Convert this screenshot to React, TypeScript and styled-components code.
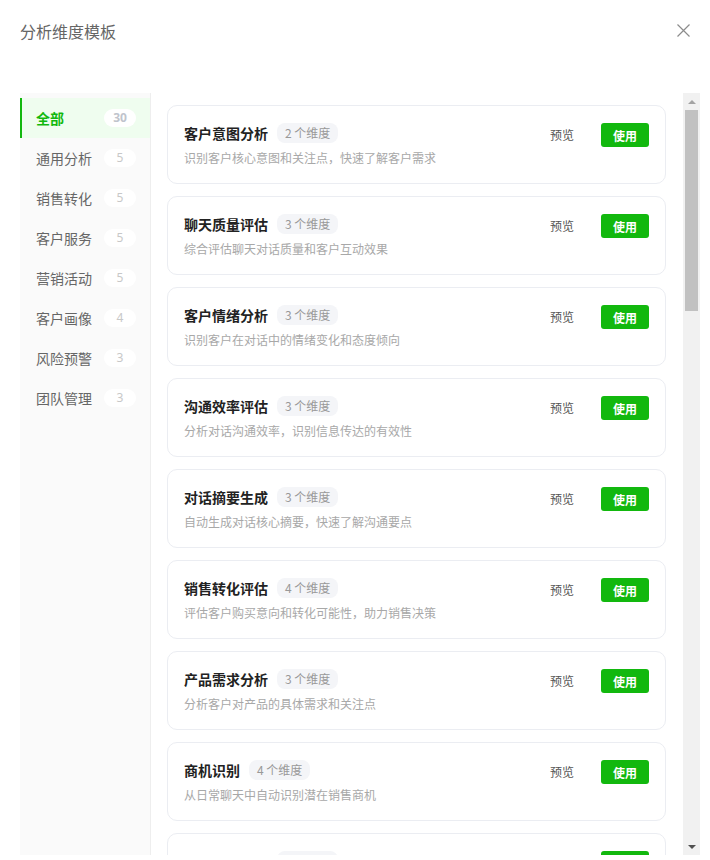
import styled, { createGlobalStyle } from "styled-components";
import { useLayoutEffect, useRef, useState } from "react";

const GlobalStyle = createGlobalStyle`
  html, body {
    margin: 0;
    padding: 0;
    background: #fff;
    font-family: "Noto Sans CJK SC", "Noto Sans", sans-serif;
  }
  * {
    box-sizing: border-box;
  }
`;

const Dialog = styled.div`
  width: 700px;
  height: 860px;
  display: flex;
  flex-direction: column;
  background: #fff;
`;
const Header = styled.div`
  height: 93px;
  padding: 20px 7px 0 20px;
  display: flex;
  align-items: flex-start;
  justify-content: space-between;
`;
const Title = styled.h3`
  margin: 0;
  font-size: 16px;
  line-height: 22px;
  font-weight: 400;
  color: #666;
`;
const Close = styled.button`
  width: 20px;
  height: 20px;
  border: none;
  background: none;
  padding: 0;
  cursor: pointer;
  display: flex;
  align-items: center;
  justify-content: center;
`;
const Body = styled.div`
  height: 762px;
  margin-left: 20px;
  display: flex;
`;
const Sidebar = styled.div`
  width: 131px;
  background: #fafafa;
  border-right: 1px solid #eeeeee;
  padding-top: 5px;
`;
const NavItem = styled.div<{ $active?: boolean }>`
  height: 40px;
  padding: 0 14px 0 14px;
  display: flex;
  align-items: center;
  justify-content: space-between;
  font-size: 14px;
  cursor: pointer;
  color: ${(p) => (p.$active ? "#12b80e" : "#666")};
  font-weight: ${(p) => (p.$active ? 700 : 400)};
  background: ${(p) => (p.$active ? "#effdef" : "transparent")};
  border-left: 2px solid ${(p) => (p.$active ? "#12b80e" : "transparent")};
`;
const Badge = styled.span<{ $active?: boolean }>`
  width: 32px;
  height: 18px;
  border-radius: 9px;
  background: #fff;
  font-size: 12px;
  line-height: 18px;
  text-align: center;
  color: ${(p) => (p.$active ? "#c0c4cc" : "#c8c8c8")};
  font-weight: ${(p) => (p.$active ? 700 : 400)};
  font-family: "Noto Sans", sans-serif;
`;
const ListWrap = styled.div`
  flex: 1;
  display: flex;
  min-width: 0;
`;
const Viewport = styled.div`
  flex: 1;
  overflow-y: auto;
  padding: 12px 17px 12px 16px;
  scrollbar-width: none;
  &::-webkit-scrollbar {
    display: none;
  }
`;
const Scrollbar = styled.div`
  width: 17px;
  background: #f1f1f1;
  display: flex;
  flex-direction: column;
`;
const ArrowButton = styled.div<{ $down?: boolean }>`
  height: 17px;
  flex-shrink: 0;
  display: flex;
  align-items: center;
  justify-content: center;
  &::before {
    content: "";
    width: 0;
    height: 0;
    border-left: 4px solid transparent;
    border-right: 4px solid transparent;
    ${(p) =>
      p.$down
        ? "border-top: 4px solid #505050;"
        : "border-bottom: 4px solid #a3a3a3;"}
  }
`;
const Track = styled.div`
  flex: 1;
  position: relative;
`;
const Thumb = styled.div`
  position: absolute;
  left: 2px;
  right: 2px;
  background: #c1c1c1;
`;
const Card = styled.div`
  border: 1px solid #ebedf2;
  border-radius: 10px;
  padding: 16px;
  margin-bottom: 12px;
  display: flex;
  align-items: flex-start;
  justify-content: space-between;
  background: #fff;
`;
const Info = styled.div`
  display: flex;
  flex-direction: column;
`;
const TitleRow = styled.div`
  height: 22px;
  display: flex;
  align-items: center;
  gap: 9px;
`;
const CardTitle = styled.span`
  font-size: 14px;
  font-weight: 700;
  color: #222;
`;
const Tag = styled.span`
  height: 20px;
  padding: 0 8px;
  border-radius: 8px;
  background: #f4f5f8;
  color: #999;
  font-size: 12px;
  line-height: 20px;
`;
const Desc = styled.div`
  margin-top: 5px;
  font-size: 12px;
  line-height: 18px;
  color: #a8a8a8;
`;
const Actions = styled.div`
  display: flex;
  align-items: center;
  padding-top: 1px;
`;
const Preview = styled.span`
  font-size: 12px;
  line-height: 22px;
  color: #555;
  margin-right: 27px;
  cursor: pointer;
`;
const UseButton = styled.button`
  height: 24px;
  padding: 0 12px;
  border: none;
  border-radius: 3px;
  background: #12b80e;
  color: #fff;
  font-size: 12px;
  font-weight: 700;
  font-family: inherit;
  cursor: pointer;
`;

const categories = [
  { name: "全部", count: 30 },
  { name: "通用分析", count: 5 },
  { name: "销售转化", count: 5 },
  { name: "客户服务", count: 5 },
  { name: "营销活动", count: 5 },
  { name: "客户画像", count: 4 },
  { name: "风险预警", count: 3 },
  { name: "团队管理", count: 3 },
];

const templates = [
  { title: "客户意图分析", dims: 2, desc: "识别客户核心意图和关注点，快速了解客户需求" },
  { title: "聊天质量评估", dims: 3, desc: "综合评估聊天对话质量和客户互动效果" },
  { title: "客户情绪分析", dims: 3, desc: "识别客户在对话中的情绪变化和态度倾向" },
  { title: "沟通效率评估", dims: 3, desc: "分析对话沟通效率，识别信息传达的有效性" },
  { title: "对话摘要生成", dims: 3, desc: "自动生成对话核心摘要，快速了解沟通要点" },
  { title: "销售转化评估", dims: 4, desc: "评估客户购买意向和转化可能性，助力销售决策" },
  { title: "产品需求分析", dims: 3, desc: "分析客户对产品的具体需求和关注点" },
  { title: "商机识别", dims: 4, desc: "从日常聊天中自动识别潜在销售商机" },
  { title: "价格敏感分析", dims: 3, desc: "识别客户对价格的敏感程度和预算范围" },
  { title: "成交阶段判断", dims: 3, desc: "判断客户当前所处的成交阶段" },
  { title: "服务满意度", dims: 4, desc: "评估客户对服务过程的满意程度" },
  { title: "问题解决率", dims: 3, desc: "分析客户问题是否得到有效解决" },
  { title: "投诉风险识别", dims: 3, desc: "识别对话中潜在的客户投诉风险" },
  { title: "响应时效分析", dims: 2, desc: "统计并分析客服响应的及时性" },
  { title: "服务规范检查", dims: 4, desc: "检查服务用语和流程是否符合规范" },
  { title: "活动兴趣分析", dims: 3, desc: "识别客户对营销活动的兴趣程度" },
  { title: "优惠敏感度", dims: 2, desc: "分析客户对优惠信息的反应和偏好" },
  { title: "渠道来源分析", dims: 3, desc: "识别客户来源渠道和触达方式" },
  { title: "活动效果评估", dims: 4, desc: "评估营销活动的整体转化效果" },
  { title: "复购意向分析", dims: 3, desc: "识别客户再次购买的意向和时机" },
  { title: "客户标签提取", dims: 4, desc: "从聊天内容中提取客户画像标签" },
  { title: "消费能力评估", dims: 3, desc: "评估客户的消费水平和购买能力" },
  { title: "兴趣偏好分析", dims: 3, desc: "分析客户的兴趣爱好和产品偏好" },
  { title: "客户生命周期", dims: 4, desc: "判断客户所处的生命周期阶段" },
  { title: "流失风险预警", dims: 3, desc: "识别客户流失的风险信号" },
  { title: "敏感词监测", dims: 2, desc: "监测对话中出现的敏感词和违规内容" },
  { title: "合规风险检查", dims: 3, desc: "检查对话内容是否存在合规风险" },
  { title: "员工表现评估", dims: 4, desc: "综合评估员工在沟通中的表现" },
  { title: "话术执行分析", dims: 3, desc: "分析员工对标准话术的执行情况" },
  { title: "团队协作评估", dims: 3, desc: "评估团队成员之间的协作效率" },
];

function App() {
  const [active, setActive] = useState(0);
  const viewRef = useRef<HTMLDivElement>(null);
  const [bar, setBar] = useState({ top: 0, size: 0 });

  const measure = () => {
    const el = viewRef.current;
    if (!el) return;
    const track = el.clientHeight - 34; // minus two arrow buttons
    const size = Math.max(20, (track * el.clientHeight) / el.scrollHeight);
    const max = el.scrollHeight - el.clientHeight;
    const top = max > 0 ? ((track - size) * el.scrollTop) / max : 0;
    setBar({ top, size });
  };

  useLayoutEffect(() => {
    measure();
  }, []);

  return (
    <>
      <GlobalStyle />
      <Dialog>
        <Header>
          <Title>分析维度模板</Title>
          <Close aria-label="关闭">
            <svg width="13" height="13" viewBox="0 0 13 13">
              <path d="M0.5 0.5 L12.5 12.5 M12.5 0.5 L0.5 12.5" stroke="#8c8c8c" strokeWidth="1.2" fill="none" />
            </svg>
          </Close>
        </Header>
        <Body>
          <Sidebar>
            {categories.map((c, i) => (
              <NavItem key={c.name} $active={i === active} onClick={() => setActive(i)}>
                {c.name}
                <Badge $active={i === active}>{c.count}</Badge>
              </NavItem>
            ))}
          </Sidebar>
          <ListWrap>
            <Viewport ref={viewRef} onScroll={measure}>
              {templates.map((t) => (
                <Card key={t.title}>
                  <Info>
                    <TitleRow>
                      <CardTitle>{t.title}</CardTitle>
                      <Tag>{t.dims} 个维度</Tag>
                    </TitleRow>
                    <Desc>{t.desc}</Desc>
                  </Info>
                  <Actions>
                    <Preview>预览</Preview>
                    <UseButton>使用</UseButton>
                  </Actions>
                </Card>
              ))}
            </Viewport>
            <Scrollbar>
              <ArrowButton />
              <Track>
                <Thumb style={{ top: bar.top, height: bar.size }} />
              </Track>
              <ArrowButton $down />
            </Scrollbar>
          </ListWrap>
        </Body>
      </Dialog>
    </>
  );
}

export default App;
